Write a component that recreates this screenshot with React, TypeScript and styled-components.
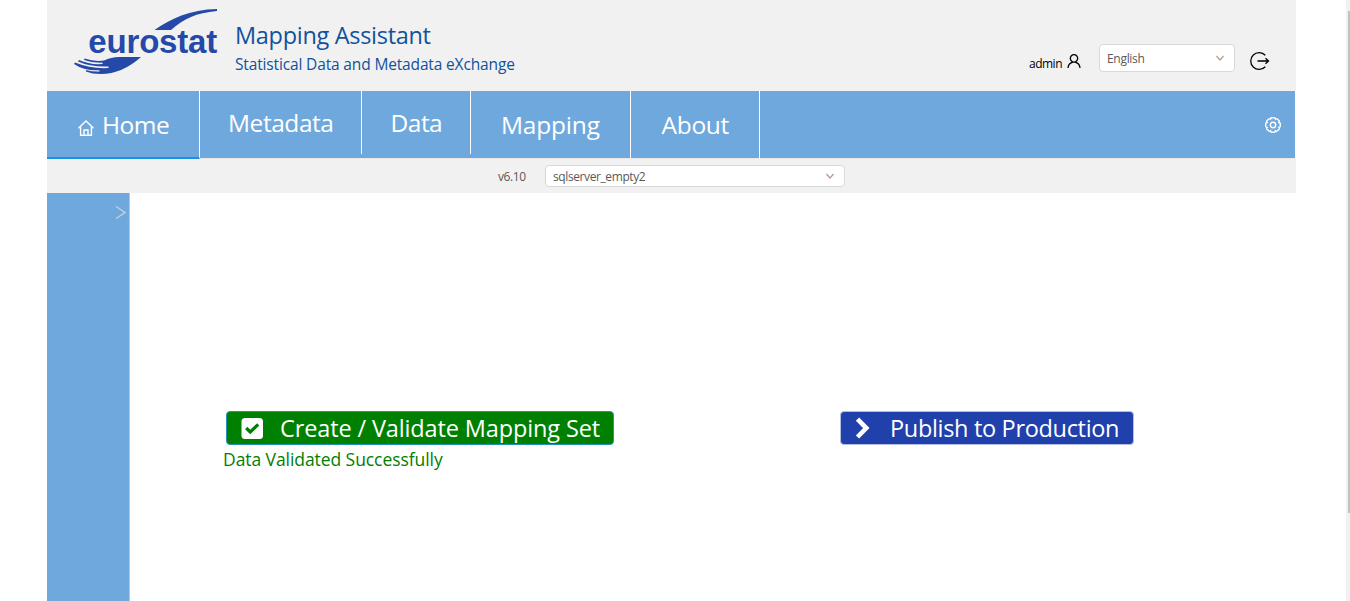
import React from 'react';
import styled, { createGlobalStyle } from 'styled-components';
import { AiOutlineUser } from 'react-icons/ai';

const GlobalStyle = createGlobalStyle`
  * { box-sizing: border-box; }
  body {
    margin: 0;
    background: #fff;
    font-family: 'Open Sans', 'Noto Sans', sans-serif;
    overflow: hidden;
  }
`;

const Screen = styled.div`
  display: flex;
  justify-content: space-between;
  width: 100%;
  height: 601px;
  padding-left: 47px;
`;

const Page = styled.div`
  display: flex;
  flex-direction: column;
  width: 1249px;
`;

const ScrollTrack = styled.div`
  width: 4px;
  padding: 11px 0 0 2px;
  background: #f1f1f1;
`;

const ScrollThumb = styled.div`
  height: 502px;
  background: #c1c1c1;
`;

const Header = styled.header`
  display: flex;
  align-items: flex-start;
  height: 91px;
  padding-left: 26px;
  background: #f1f1f1;
`;

const Logo = styled.svg`
  flex: none;
  width: 146px;
  height: 80px;
`;

const Titles = styled.div`
  flex: 1;
  padding: 19px 0 0 16px;
  color: #10529c;
`;

const Text = styled.span<{ $size: number; $line: number; $track?: number }>`
  display: block;
  font-size: ${(p) => p.$size}px;
  line-height: ${(p) => p.$line}px;
  letter-spacing: ${(p) => p.$track ?? 0}px;
  white-space: nowrap;
`;

const UserTools = styled.div`
  display: flex;
  align-items: flex-start;
  width: 267px;
  padding-top: 44px;
`;

const UserName = styled.div`
  display: flex;
  width: 70px;
  padding-top: 8px;
  color: #000;
  svg {
    flex: none;
    margin: 0 0 0 2px;
  }
`;

const NameSlot = styled.div`
  width: 34px;
  padding-top: 3px;
`;

const Select = styled.div<{ $width: number; $height: number; $drop?: number }>`
  display: flex;
  align-items: center;
  justify-content: space-between;
  width: ${(p) => p.$width}px;
  height: ${(p) => p.$height}px;
  padding: ${(p) => p.$drop ?? 0}px 9px 0 7px;
  border: 1px solid #d9d9d9;
  border-radius: 4px;
  background: #fff;
  color: #595959;
  svg {
    color: #b49a8c;
    margin-bottom: ${(p) => p.$drop ?? 0}px;
  }
`;

const LogoutButton = styled.div`
  display: flex;
  padding: 7px 0 0 15px;
  color: #000;
`;

const Nav = styled.nav`
  display: flex;
  width: 1248px;
  height: 67px;
  background: #6fa8dc;
  color: #fff;
`;

const NavItem = styled.div<{ $width: number; $pad: number; $top: number; $active?: boolean; $short?: boolean }>`
  position: relative;
  display: flex;
  width: ${(p) => p.$width}px;
  height: ${(p) => (p.$active ? 68 : p.$short ? 63 : 67)}px;
  padding: ${(p) => p.$top}px 0 0 ${(p) => p.$pad}px;
  border-right: 1px solid #fff;
  border-bottom: ${(p) => (p.$active ? '2px solid #1890e8' : 'none')};
  svg {
    flex: none;
    margin: 12px 7px 0 0;
  }
`;

const NavSettings = styled.div`
  flex: 1;
  display: flex;
  justify-content: flex-end;
  padding: 25px 13px 0 0;
`;

const StoreBar = styled.div`
  display: flex;
  height: 35px;
  padding: 6px 0 0 451px;
  border-top: 1px solid #e8e8e8;
  background: #f1f1f1;
  color: #595959;
`;

const Version = styled.div`
  width: 47px;
  padding-top: 1px;
`;

const Body = styled.div`
  flex: 1;
  display: flex;
`;

const Sidebar = styled.aside`
  display: flex;
  align-items: flex-start;
  justify-content: flex-end;
  width: 83px;
  padding: 12px 2px 0 0;
  border-right: 1px solid #a9c9e8;
  background: #6fa8dc;
  color: #c4cfd9;
`;

const Main = styled.main`
  flex: 1;
  display: flex;
  align-items: flex-start;
  padding: 218px 0 0 96px;
`;

const ValidateColumn = styled.div`
  width: 614px;
`;

const ActionButton = styled.div<{ $width: number; $bg: string; $edge: string }>`
  display: flex;
  align-items: flex-start;
  width: ${(p) => p.$width}px;
  height: 34px;
  border: 1px solid ${(p) => p.$edge};
  border-radius: 4px;
  background: ${(p) => p.$bg};
  color: #fff;
`;

const ActionIcon = styled.div<{ $left: number; $width: number }>`
  display: flex;
  flex: none;
  width: ${(p) => p.$width}px;
  padding: 5px 0 0 ${(p) => p.$left}px;
`;

const Status = styled.div`
  margin: 2px 0 0 -3px;
  color: #008000;
`;

function EurostatLogo() {
  return (
    <Logo viewBox="73 0 146 80">
      <path
        d="M154.5 30 C170 19 190 9.5 217 9 L217 11 C196 13 184 18.500 171 30 Z"
        fill="#2449a8"
      />
      <text
        x="88.300"
        y="53"
        textLength="129"
        fontFamily="Liberation Sans, Arial, sans-serif"
        fontWeight="bold"
        fontSize="33"
        fill="#2449a8"
      >
        eurostat
      </text>
      <path
        d="M84.500 58.500 Q95 62 104 60.500 Q111 57 119 57 L141 57 Q122 74 101 74 Q92 74 86 71.500 L86 70 Q93 72 99.500 71.500 L99.500 70.300 Q84 71 74 64 L75 62.500 Q91 69 108.500 68 L108.500 66.500 Q90 67 78 61.500 L79 60 Q90 65 102.500 64 L102.500 62.600 Q92 63 84 60 Z"
        fill="#2449a8"
      />
    </Logo>
  );
}

function HomeIcon() {
  return (
    <svg width="18" height="18" viewBox="0 0 18 18" fill="none" stroke="currentColor" strokeWidth="1.400">
      <path d="M1.500 9.300 L9 2 L16.500 9.300 M3.600 8 V16.300 H14.400 V8 M7 16 V11 H11 V16" />
    </svg>
  );
}

function DownIcon() {
  return (
    <svg width="10" height="10" viewBox="0 0 10 10" fill="none" stroke="currentColor" strokeWidth="1.200">
      <path d="M1.500 3 L5 7 L8.500 3" />
    </svg>
  );
}

function LogoutIcon() {
  return (
    <svg width="20" height="20" viewBox="0 0 20 20" fill="none" stroke="currentColor" strokeWidth="1.300">
      <path d="M15.300 4.300 A8.400 8.400 0 1 0 15.300 15.700 M7.500 10 H18.500 M15.500 7.300 L18.500 10 L15.500 12.700" />
    </svg>
  );
}

function GearIcon() {
  const petals = Array.from({ length: 8 }, (_, i) => {
    const at = (deg: number, r: number) => {
      const a = (deg * Math.PI) / 180;
      return `${(9 + r * Math.cos(a)).toFixed(2)} ${(9 + r * Math.sin(a)).toFixed(2)}`;
    };
    const start = i * 45 - 22.5;
    return `${i === 0 ? `M${at(start, 6.4)}` : ''} Q${at(start + 5, 7.6)} ${at(start + 12, 7.4)} L${at(start + 33, 7.4)} Q${at(start + 40, 7.6)} ${at(start + 45, 6.4)}`;
  }).join(' ');
  return (
    <svg width="18" height="18" viewBox="0 0 18 18" fill="none" stroke="currentColor" strokeWidth="1.400">
      <path d={`${petals} Z`} />
      <circle cx="9" cy="9" r="2.700" />
    </svg>
  );
}

function ExpandIcon() {
  return (
    <svg width="12" height="16" viewBox="0 0 12 16" fill="none" stroke="currentColor" strokeWidth="1.500">
      <path d="M1 1.500 L10 7.500 L1 13.500" />
    </svg>
  );
}

function CheckSquareIcon() {
  return (
    <svg width="23" height="23" viewBox="0 0 23 23">
      <rect x="0.500" y="1" width="21.500" height="21" rx="3.500" fill="#fff" />
      <path d="M5.200 11 L9.300 15 L17.200 7.300" fill="none" stroke="#008000" strokeWidth="3.200" />
    </svg>
  );
}

function ChevronIcon() {
  return (
    <svg width="18" height="24" viewBox="0 0 18 24" fill="none" stroke="#fff" strokeWidth="4.600">
      <path d="M2.500 2.200 L11.300 11.100 L2.500 20" />
    </svg>
  );
}

export default function App() {
  return (
    <>
      <GlobalStyle />
      <Screen>
        <Page>
          <Header>
            <EurostatLogo />
            <Titles>
              <Text $size={23.5} $line={32} $track={-0.3}>Mapping Assistant</Text>
              <Text $size={15.5} $line={27} $track={-0.15}>Statistical Data and Metadata eXchange</Text>
            </Titles>
            <UserTools>
              <UserName>
                <NameSlot>
                  <Text $size={12} $line={17} $track={-0.5}>admin</Text>
                </NameSlot>
                <AiOutlineUser size={18} />
              </UserName>
              <Select $width={136} $height={28} $drop={1}>
                <Text $size={12} $line={20} $track={-0.3}>English</Text>
                <DownIcon />
              </Select>
              <LogoutButton>
                <LogoutIcon />
              </LogoutButton>
            </UserTools>
          </Header>
          <Nav>
            <NavItem $width={153} $pad={30} $top={16} $active>
              <HomeIcon />
              <Text $size={24.5} $line={35} $track={-0.5}>Home</Text>
            </NavItem>
            <NavItem $width={162} $pad={28} $top={14} $short>
              <Text $size={24.5} $line={35} $track={-0.45}>Metadata</Text>
            </NavItem>
            <NavItem $width={109} $pad={28.5} $top={14} $short>
              <Text $size={24.5} $line={35} $track={-0.5}>Data</Text>
            </NavItem>
            <NavItem $width={160} $pad={30} $top={16}>
              <Text $size={24.5} $line={35} $track={-0.2}>Mapping</Text>
            </NavItem>
            <NavItem $width={129} $pad={30.5} $top={16}>
              <Text $size={24.5} $line={35} $track={-0.3}>About</Text>
            </NavItem>
            <NavSettings>
              <GearIcon />
            </NavSettings>
          </Nav>
          <StoreBar>
            <Version>
              <Text $size={12} $line={21} $track={-0.4}>v6.10</Text>
            </Version>
            <Select $width={300} $height={22} $drop={1}>
              <Text $size={12} $line={20} $track={-0.4}>sqlserver_empty2</Text>
              <DownIcon />
            </Select>
          </StoreBar>
          <Body>
            <Sidebar>
              <ExpandIcon />
            </Sidebar>
            <Main>
              <ValidateColumn>
                <ActionButton $width={388} $bg="#008000" $edge="#2492bd">
                  <ActionIcon $left={14} $width={53}>
                    <CheckSquareIcon />
                  </ActionIcon>
                  <Text $size={23.5} $line={33} $track={-0.13}>Create / Validate Mapping Set</Text>
                </ActionButton>
                <Status>
                  <Text $size={17.5} $line={25} $track={-0.07}>Data Validated Successfully</Text>
                </Status>
              </ValidateColumn>
              <ActionButton $width={294} $bg="#2040ac" $edge="#b4bfe0">
                <ActionIcon $left={14} $width={49}>
                  <ChevronIcon />
                </ActionIcon>
                <Text $size={23.5} $line={33} $track={-0.32}>Publish to Production</Text>
              </ActionButton>
            </Main>
          </Body>
        </Page>
        <ScrollTrack>
          <ScrollThumb />
        </ScrollTrack>
      </Screen>
    </>
  );
}
